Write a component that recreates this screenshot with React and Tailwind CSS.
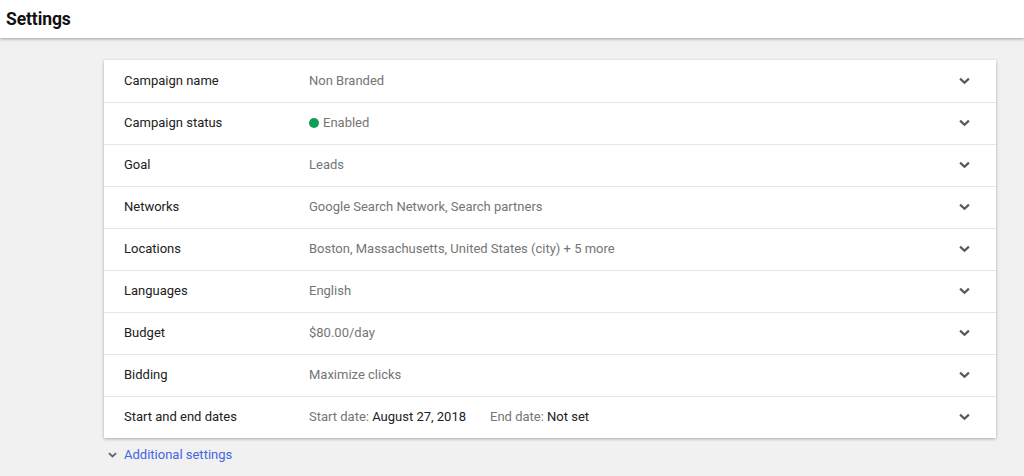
import React from 'react'

const rows = [
  { label: 'Campaign name', value: 'Non Branded' },
  { label: 'Campaign status', value: 'Enabled', dot: true },
  { label: 'Goal', value: 'Leads' },
  { label: 'Networks', value: 'Google Search Network, Search partners' },
  { label: 'Locations', value: 'Boston, Massachusetts, United States (city) + 5 more' },
  { label: 'Languages', value: 'English' },
  { label: 'Budget', value: '$80.00/day' },
  { label: 'Bidding', value: 'Maximize clicks' },
  { label: 'Start and end dates', dates: true },
];

const Chevron = ({ className }) => (
  <svg viewBox="0 0 12 8" className={className} fill="none" stroke="currentColor" strokeWidth="2.4">
    <polyline points="1.2,1.4 6,6 10.8,1.4" />
  </svg>
);

const App = () => {
  return (
    <div className="min-h-[476px] bg-[#f1f1f1] font-['Roboto',sans-serif]">
      <header className="h-[38px] bg-white flex items-center px-[6px] shadow-[0_1px_3px_rgba(0,0,0,0.35)] relative">
        <h1 className="text-[17.5px] font-bold text-[#111] tracking-[-0.1px]">Settings</h1>
      </header>
      <div className="pl-[104px] pr-[28px] pt-[22px]">
        <div className="bg-white shadow-[0_1px_3px_rgba(0,0,0,0.3)]">
          {rows.map((r, i) => (
            <div key={i} className={`h-[42px] flex items-center pb-[1px] ${i > 0 ? 'border-t border-[#e6e6e6]' : ''}`}>
              <div className="w-[205px] pl-[20px] text-[13px] text-[#212121]">{r.label}</div>
              <div className="flex-1 flex items-center text-[13px] text-[#757575]">
                {r.dot && <span className="w-[10px] h-[10px] rounded-full bg-[#0f9d58] mr-[4px]" />}
                {r.dates ? (
                  <>
                    <span>Start date: <span className="text-[#212121]">August 27, 2018</span></span>
                    <span className="ml-[24px]">End date: <span className="text-[#212121]">Not set</span></span>
                  </>
                ) : r.value}
              </div>
              <Chevron className="w-[11px] h-[8px] text-[#555a60] mr-[26px]" />
            </div>
          ))}
        </div>
        <div className="flex items-center mt-[7px] pl-[4px] text-[13px] text-[#4466e0]">
          <Chevron className="w-[9px] h-[6px] text-[#5f6368] mr-[7px]" />
          <span>Additional settings</span>
        </div>
      </div>
    </div>
  );
};

export default App;
